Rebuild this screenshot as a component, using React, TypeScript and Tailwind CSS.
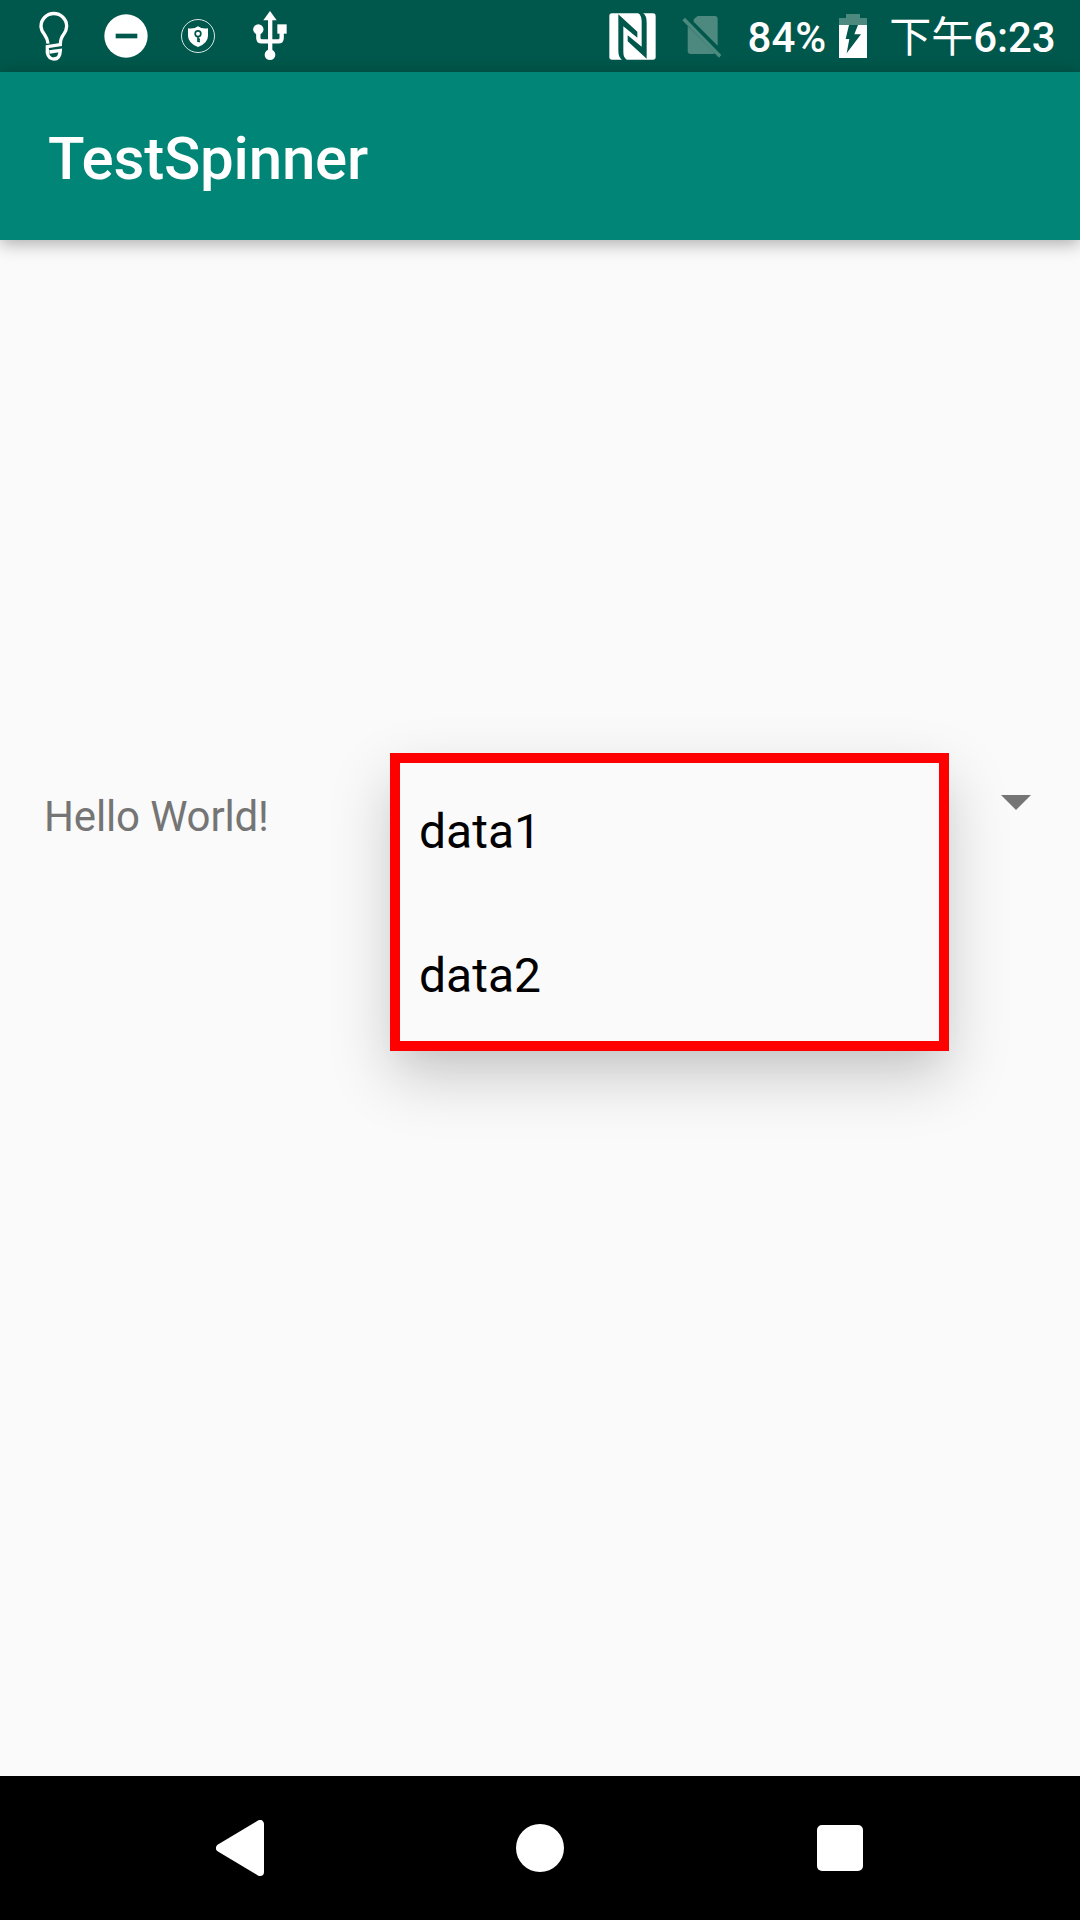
import React from "react";

function BulbIcon() {
  return (
    <svg className="ml-[38px] h-[52px] w-8" viewBox="0 0 96 156" fill="none" stroke="#fff" strokeWidth="10">
      <path d="M30 101Q29 87 19 73Q9 60 9 49A38.5 38.5 0 0 1 86 49Q86 60 77 73Q67 86 67 104L28 110V129Q32 147 48 147Q66 147 67 121L34 126" />
    </svg>
  );
}

function MinusIcon() {
  return (
    <svg className="ml-[34px] h-11 w-11" viewBox="0 0 132 132">
      <circle cx="66" cy="66" r="65" fill="#fff" />
      <path d="M35 59h65v14H35z" fill="#00574b" />
    </svg>
  );
}

function ShieldIcon() {
  return (
    <svg className="ml-[33px] h-[34px] w-[34px]" viewBox="0 0 102 102" fill="none">
      <circle cx="51" cy="51" r="49.5" stroke="#fff" strokeOpacity=".85" strokeWidth="3" />
      <path d="M51 22Q63 31 81 28V50Q81 72 51 84Q21 72 21 50V28Q39 31 51 22Z" fill="#fff" />
      <circle cx="51" cy="44" r="8.5" stroke="#00574b" strokeWidth="5" />
      <path d="M51 52V69M52 61h5M52 67h5" stroke="#00574b" strokeWidth="5" />
    </svg>
  );
}

function UsbIcon() {
  return (
    <svg className="ml-[38px] h-[50px] w-[34px]" viewBox="0 0 102 150" fill="#fff">
      <path d="M51 0L71 28H31Z" />
      <path d="M45 20h13v110H45z" />
      <circle cx="51" cy="131" r="16" />
      <circle cx="16" cy="55" r="15.5" />
      <path d="M73 40h28v28H73z" />
      <path d="M16 60V81Q16 91 26 91H76Q86 91 86 81V60" fill="none" stroke="#fff" strokeWidth="13" />
    </svg>
  );
}

function NfcIcon() {
  return (
    <svg className="h-[47px] w-[47px]" viewBox="0 0 141 141">
      <rect x="1" y="1" width="139" height="139" rx="8" fill="#fff" />
      <g fill="#00574b">
        <path d="M28 4L85 56V74L43 40V117Q43 134 54 141H39Q28 134 28 112Z" />
        <path d="M28 4L85 56V74L43 40V117Q43 134 54 141H39Q28 134 28 112Z" transform="rotate(180 70.5 70.5)" />
      </g>
    </svg>
  );
}

function NoSimIcon() {
  return (
    <svg className="ml-[26px] h-[43px] w-10" viewBox="0 0 120 129" fill="#4d897f">
      <path d="M35 13L47 3H98Q107 3 107 12V92L35 20Z" />
      <path d="M17 33L99 115Q96 117 92 117H26Q17 117 17 108Z" />
      <path d="M1 16L9 8L118 120L111 128Z" />
    </svg>
  );
}

function BatteryIcon() {
  return (
    <svg className="ml-[13px] h-11 w-7" viewBox="0 0 84 132">
      <path d="M21 0H63V12H84V33H0V12H21Z" fill="#4d897f" />
      <path d="M0 33H84V132H0Z" fill="#fff" />
      <path d="M30 33H57L46 61H66L23 118L31 75H20Z" fill="#00574b" />
    </svg>
  );
}

function StatusBar() {
  return (
    <header className="flex h-[72px] items-center justify-between bg-[#00574b] text-white">
      <div className="flex items-center">
        <BulbIcon />
        <MinusIcon />
        <ShieldIcon />
        <UsbIcon />
      </div>
      <div className="flex items-center pr-[24.5px] text-[42px] leading-[72px] font-medium">
        <NfcIcon />
        <NoSimIcon />
        <span className="ml-[26px] h-[72px] pt-[2px]">84%</span>
        <BatteryIcon />
        <span className="ml-[22px] flex h-[72px] pt-[2px]">
          <span className="-mt-1 font-['Noto_Sans_CJK_SC',sans-serif] font-normal">下午</span>
          <span className="tracking-[-0.1px]">6:23</span>
        </span>
      </div>
    </header>
  );
}

export default function App() {
  return (
    <div className="flex h-[1920px] w-[1080px] flex-col overflow-hidden bg-[#fafafa] font-[Roboto,sans-serif]">
      <StatusBar />
      <div className="flex h-[168px] shrink-0 items-center bg-[#008577] pt-[5px] pl-12 shadow-[0_4px_16px_rgba(0,0,0,0.31)]">
        <h1 className="text-[60px] leading-[71px] font-medium tracking-[-0.2px] text-white">TestSpinner</h1>
      </div>
      <main className="flex flex-1 items-start pt-[513px]">
        <p className="mt-[39px] w-[390px] shrink-0 pl-11 text-[42px] leading-[49px] tracking-[-0.15px] text-[#757575]">
          Hello World!
        </p>
        <ul className="h-[298px] w-[559px] shrink-0 border-[10px] border-[#ff0000] bg-[#fafafa] pl-[19px] text-5xl text-black shadow-[0_26px_58px_rgba(0,0,0,0.19),0_20px_30px_-14px_rgba(0,0,0,0.06)]">
          <li className="-mt-[3px] flex h-36 items-center">data1</li>
          <li className="flex h-36 items-center">data2</li>
        </ul>
        <svg className="mt-[42px] ml-[52px] h-[15px] w-[30px]" viewBox="0 0 30 15" fill="#757575">
          <path d="M0 0h30L15 15z" />
        </svg>
      </main>
      <nav className="flex h-36 shrink-0 items-center bg-black pl-[216px]">
        <svg className="h-14 w-12" viewBox="0 0 48 56" fill="#fff" stroke="#fff" strokeWidth="8" strokeLinejoin="round">
          <path d="M44 4V52L4 28Z" />
        </svg>
        <span className="ml-[252px] h-12 w-12 rounded-full bg-white" />
        <span className="ml-[253px] h-[46px] w-[46px] rounded-[5px] bg-white" />
      </nav>
    </div>
  );
}
